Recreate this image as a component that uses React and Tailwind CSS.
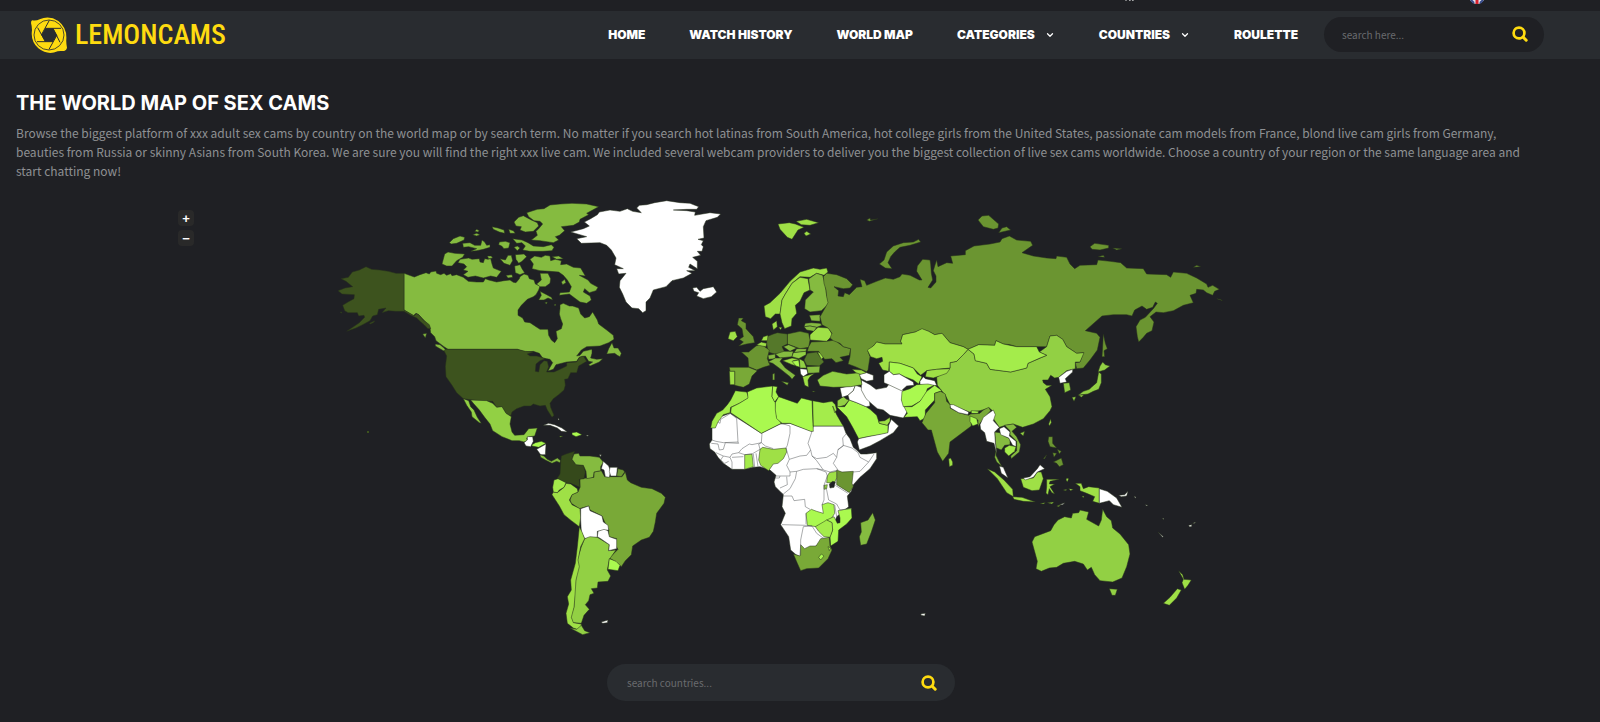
import React, { useState } from 'react';
import { ChevronDown } from 'lucide-react';

const navItems = [
  { label: 'HOME' },
  { label: 'WATCH HISTORY' },
  { label: 'WORLD MAP' },
  { label: 'CATEGORIES', menu: true },
  { label: 'COUNTRIES', menu: true },
  { label: 'ROULETTE' },
];

// Fill colors, from no cams (white) to the most cams (darkest)
const W = '#ffffff';
const A = '#aaf94f';
const B = '#a4ec4b';
const C = '#9fe046';
const D = '#92d044';
const E = '#85bb40';
const F = '#79a937';
const G = '#6b9531';
const H = '#55782a';
const I = '#3d531e';
const J = '#35491b';
const SEA = '#1f2024';

// Each region has its own origin, points are in thirds of a map unit
const regions = [
  {
    name: 'north-america',
    x: 320,
    y: 190,
    shapes: [
      [E, '252,250 283,261 300,254 318,248 328,252 332,246 348,243 350,250 362,254 372,250 380,256 392,251 396,257 410,254 430,262 445,274 470,276 490,276 496,266 506,270 530,276 552,272 570,270 580,277 588,278 598,266 600,260 612,252 624,256 628,266 642,270 646,282 660,288 656,300 648,314 640,320 622,328 604,346 594,360 594,376 608,384 614,396 630,398 648,410 660,418 684,418 686,436 694,450 704,458 712,446 708,424 724,416 728,402 722,386 718,372 720,356 720,344 730,340 748,348 758,348 776,354 782,372 794,384 808,380 818,366 832,390 836,402 860,420 880,436 882,448 866,458 840,468 800,470 784,480 770,498 780,496 790,484 816,478 816,490 812,504 830,508 848,506 838,516 810,528 806,524 818,516 806,514 796,498 778,502 770,514 740,516 708,524 700,538 684,543 690,532 698,518 690,508 668,504 658,490 640,484 615,486 592,478 384,478 372,470 348,452 344,440 332,428 330,414 322,402 296,374 288,370 280,377 252,360'],
      [I, '252,250 228,250 205,244 180,240 155,238 138,230 118,240 97,246 85,262 63,266 78,274 98,290 75,294 54,302 66,312 103,314 102,326 84,336 68,346 74,362 84,368 112,368 116,378 132,376 134,382 118,398 98,412 80,424 108,414 128,404 150,392 158,378 172,374 176,358 198,354 186,368 205,362 228,364 252,364 272,376 290,384 300,394 312,404 324,416 332,416 328,404 310,390 296,374 290,371 282,377 252,360'],
      [I, '148,400 164,392 162,397 152,402'],
      [I, '60,366 66,366 64,370'],
      [E, '346,462 360,464 372,474 382,486 370,482 356,474 346,468'],
      [E, '308,432 320,430 316,444'],
      [E, '876,458 866,476 860,492 884,490 892,496 900,500 904,490 894,474 882,474'],
      [E, '836,50 800,42 756,40 720,42 690,45 672,56 652,58 620,68 626,80 642,92 660,94 668,102 656,116 648,124 652,136 634,150 660,152 700,158 716,150 706,140 718,136 734,122 724,110 760,106 778,96 780,88 806,74 800,70'],
      [E, '582,96 596,82 610,77 634,90 652,98 656,108 640,124 616,126 600,120 604,110 588,108'],
      [E, '578,146 606,150 624,158 640,168 670,170 694,164 702,172 696,182 668,184 630,184 608,180 616,168 606,158 590,160'],
      [E, '538,156 556,154 570,158 566,174 552,176 545,168 536,164'],
      [E, '582,172 592,168 600,174 592,182'],
      [E, '516,110 534,114 552,120 554,130 538,126 520,118'],
      [E, '566,118 580,122 586,130 570,130'],
      [E, '388,158 400,146 420,138 434,142 432,150 410,160 394,162'],
      [E, '464,124 470,118 478,122 474,126'],
      [E, '458,134 470,130 480,134 470,138'],
      [E, '428,160 450,158 464,166 482,166 486,150 494,156 500,166 510,164 510,172 490,178 470,182 452,184 470,176 446,170 430,172'],
      [E, '366,222 374,192 384,186 404,190 434,192 428,202 410,212 396,228 380,228'],
      [E, '414,218 420,208 446,204 456,208 478,206 480,216 490,218 494,206 504,208 512,206 516,222 520,234 544,244 530,262 512,258 490,264 466,258 444,262 430,254 444,244 430,240 440,230 432,222'],
      [E, '540,206 556,210 564,196 574,196 578,212 570,226 552,220'],
      [E, '502,198 514,198 518,204 506,206'],
      [E, '586,194 612,192 620,200 606,214 596,220 588,208'],
      [E, '584,228 600,224 606,236 614,248 600,254 586,248'],
      [E, '558,256 576,254 578,262 564,264'],
      [E, '630,208 644,198 664,202 676,196 690,198 692,212 706,208 724,212 722,224 740,222 760,232 782,234 796,258 778,256 804,270 812,280 834,292 828,302 808,308 794,296 790,306 810,318 814,330 800,340 780,336 764,324 748,312 718,316 720,308 748,306 754,290 742,270 730,256 716,246 690,244 660,242 636,236 640,222'],
      [E, '696,200 716,198 730,206 710,208'],
      [E, '660,250 684,250 692,266 690,280 676,290 660,290 650,282 664,270'],
      [E, '724,276 734,268 738,278 728,284'],
      [E, '656,330 664,316 660,304 680,314 694,322 698,330 684,324 672,330'],
      [E, '674,338 682,336 680,342'],
      [E, '702,344 708,342 706,348'],
      [I, '376,478 592,478 616,484 640,486 622,492 630,498 650,498 664,502 676,506 660,512 648,522 646,544 656,546 660,524 672,512 682,514 686,530 680,546 702,546 720,538 740,528 740,518 770,516 778,502 790,498 800,514 776,528 770,548 752,548 744,566 734,568 736,586 732,600 716,614 700,626 690,640 692,652 702,676 696,682 682,660 676,646 660,648 640,642 632,648 612,648 590,656 576,666 572,678 558,670 546,650 530,652 518,634 494,634 470,632 430,626 410,608 396,586 378,560 376,530 380,498 372,482'],
      [D, '430,626 446,632 452,650 462,660 472,682 484,700 478,698 456,680 454,666 440,646'],
    ],
  },
  {
    name: 'greenland',
    x: 540,
    y: 190,
    shapes: [
      [W, '92,126 130,116 148,108 133,96 152,86 172,74 178,66 210,60 240,64 262,56 278,64 304,68 290,54 298,46 320,44 344,38 380,32 420,38 450,40 476,50 470,58 440,58 400,60 440,62 466,66 464,76 510,68 542,72 532,82 498,92 490,110 492,144 474,148 490,152 484,164 490,170 486,184 472,184 482,196 458,202 472,214 472,236 450,222 446,232 466,242 440,242 456,250 430,264 396,272 378,290 340,300 330,324 318,336 318,362 308,368 296,356 276,354 258,336 248,312 238,292 240,272 258,250 236,252 230,236 250,236 224,224 228,204 214,180 200,166 180,158 124,160 110,146 140,140'],
      [W, '458,294 470,292 480,304 490,296 520,290 530,306 514,320 490,326 470,318 476,308 462,304'],
    ],
  },
  {
    name: 'south-america',
    x: 480,
    y: 400,
    shapes: [
      [D, '-28,0 20,2 38,10 50,22 66,20 78,40 94,50 90,72 96,96 104,106 132,104 146,86 172,84 164,108 148,110 140,114 142,122 132,126 118,122 96,122 66,110 38,92 30,72 14,52 -2,30 -20,10'],
      [W, '132,128 142,120 142,110 158,110 160,124 152,140 138,138'],
      [A, '156,134 166,128 184,124 198,130 176,142 156,138'],
      [W, '170,148 198,132 196,164 182,164'],
      [E, '180,164 192,168 202,178 214,184 232,174 242,182 240,188 230,184 216,190 196,180 182,172'],
      [W, '190,76 206,70 224,74 246,84 262,96 244,94 232,84 210,76'],
      [E, '238,108 248,108 242,112'],
      [A, '276,98 290,96 306,104 288,110 276,104'],
      [W, '318,106 326,106 322,109'],
      [W, '234,54 238,60 234,60'],
      [W, '358,164 364,164 362,170'],
      [F, '300,236 320,234 342,232 342,216 364,212 374,230 392,230 426,230 436,216 442,240 452,248 484,262 516,266 544,280 556,292 552,310 530,340 526,366 520,394 508,412 484,420 458,438 454,464 436,482 424,500 408,486 388,474 414,448 404,432 410,416 386,410 386,388 374,366 366,348 330,330 326,318 298,326 274,310 270,300 276,284 294,276 300,262'],
      [J, '242,188 244,168 258,162 284,154 280,164 276,178 288,194 310,196 316,216 312,236 298,238 300,262 272,250 252,248 232,234 240,222'],
      [E, '276,178 282,162 296,160 300,168 330,168 358,172 370,186 362,200 362,212 342,216 340,232 320,236 318,214 310,196 288,194'],
      [W, '370,184 386,198 392,214 388,232 376,230 372,210 364,206'],
      [W, '390,202 412,202 410,228 392,228 388,214'],
      [G, '414,206 430,210 434,216 424,230 410,228'],
      [C, '258,250 272,252 292,266 294,276 276,284 268,300 276,314 300,326 302,352 298,380 274,362 252,344 238,318 216,284 220,276 232,278 252,262'],
      [B, '218,262 222,240 234,236 258,248 252,262 238,270 232,278 220,276'],
      [W, '302,326 326,318 330,332 366,348 370,366 384,376 386,390 352,394 352,412 314,416 304,396 302,360'],
      [D, '314,416 330,410 352,412 388,434 386,452 408,450 388,478 382,510 392,528 384,544 354,546 352,564 334,566 342,580 330,584 326,602 316,614 328,628 312,646 304,670 278,668 272,650 282,620 284,560 290,520 292,480 304,440'],
      [W, '354,394 372,388 384,392 388,410 410,418 410,446 386,452 388,434 362,416 352,410'],
      [C, '298,380 306,396 314,416 302,440 294,480 298,500 288,540 284,600 282,622 274,652 280,668 304,672 302,692 280,684 262,670 258,640 266,612 262,590 274,570 272,540 286,490 292,440'],
      [D, '270,684 290,688 304,676 314,692 330,698 308,704'],
      [A, '388,476 408,484 420,496 414,512 384,508'],
      [W, '364,666 384,660 382,668 368,670'],
    ],
  },
  {
    name: 'africa',
    x: 690,
    y: 370,
    shapes: [
      [W, '66,174 82,156 92,140 120,130 214,190 270,162 300,160 366,184 370,168 460,168 468,190 480,206 490,232 500,240 512,252 530,252 560,248 560,266 540,296 510,322 490,344 484,364 472,378 476,410 440,440 420,500 330,560 318,554 302,540 296,500 272,464 286,430 276,410 280,374 256,350 252,336 258,316 240,300 210,290 190,292 164,298 126,298 100,280 84,262 74,246 60,236 58,222 66,210'],
      [B, '112,104 122,90 136,62 150,64 170,66 176,84 148,100 122,112 120,128 100,134 84,156 76,174 62,174 66,154 80,130 98,120'],
      [A, '172,66 200,54 248,48 246,80 256,98 260,140 274,160 214,190 122,128 124,112 148,100 174,84'],
      [A, '248,48 262,50 258,66 266,80 254,96 246,80'],
      [A, '266,80 300,92 322,100 334,84 366,92 370,184 362,184 300,160 276,160 260,146 256,120 256,98'],
      [B, '368,92 400,98 426,94 436,104 440,120 434,128 428,108 440,134 456,162 460,168 370,168'],
      [C, '210,238 218,232 250,238 288,234 290,246 280,266 264,280 250,282 236,302 212,286 206,270'],
      [B, '164,254 186,252 190,290 164,298'],
      [G, '440,300 456,306 490,304 486,340 490,350 478,368 440,344 440,322'],
      [C, '412,318 418,308 440,304 440,324 434,338 410,338'],
      [C, '402,346 412,344 410,356 402,358'],
      [SEA, '418,342 428,334 436,336 432,352 420,354'],
      [A, '348,430 364,418 380,424 400,430 396,404 414,398 432,404 434,430 424,446 398,462 378,470 352,466'],
      [A, '444,422 484,414 486,444 470,462 446,480 444,514 422,528 420,500 428,480 426,458 410,450 432,440 442,460 450,458 450,444'],
      [B, '376,470 400,456 410,450 426,458 428,480 420,502 402,500 386,484'],
      [F, '310,552 330,558 332,524 344,536 360,528 378,528 392,506 418,502 420,528 426,540 414,566 386,594 350,596 332,602 322,580'],
      [A, '386,562 394,552 402,558 392,570'],
      [A, '414,530 422,534 418,542'],
      [E, '548,428 556,450 544,486 530,522 512,526 508,500 514,486 512,458 534,450'],
      [D, '442,92 460,80 470,88 478,90 464,106 442,112'],
      [A, '440,110 464,110 478,90 500,98 528,110 540,118 560,136 568,160 594,166 594,190 560,196 534,200 506,206 488,172 470,140 450,120'],
      [C, '566,154 584,152 600,142 600,154 592,166 568,160'],
      [W, '506,206 534,200 576,192 594,188 596,166 604,148 626,168 610,188 570,212 540,228 508,240 502,216'],
      [W, '450,54 468,50 496,46 490,62 474,76 456,82'],
      [W, '474,76 490,62 496,46 514,52 538,88 540,108 528,110 500,98 478,90'],
      [W, '514,30 540,44 558,58 590,52 600,38 636,44 640,72 636,90 652,124 640,144 600,136 580,120 562,116 548,104 528,86 514,60'],
    ],
    lines: [
      '84,156 90,160 92,148 122,130 140,146 144,216 100,218 78,214 66,210',
      '144,216 146,220 106,218 100,238 88,240 84,222 64,220',
      '216,190 214,218 186,224 178,222 156,236 146,248 126,252 120,262 100,258 78,248',
      '146,248 164,254 186,252 210,238 206,222 214,218 226,228 250,236',
      '120,262 126,276 126,298 M100,258 92,270 104,280 116,274 M126,262 160,260',
      '274,160 300,168 300,190 292,226 288,234 298,268 290,286 300,306 320,304 M298,268 330,258 350,256 362,240 354,220 366,184',
      '362,240 366,258 380,266 410,262 430,250 440,262 430,280 444,300 420,306 400,300 380,272 366,258',
      '440,262 444,238 460,228 458,204 468,192 M444,240 460,226 486,234 504,248 510,262 536,276 510,304 490,306 M536,276 552,252',
      '300,306 300,318 258,318 M270,318 268,324 256,324 M320,304 316,326 300,356 280,372 274,368 M290,320 292,344 270,354',
      '320,304 340,298 380,296 408,306 412,318 402,346 402,390 M380,296 400,300',
      '280,378 306,378 312,392 344,388 346,410 360,418 M348,430 348,462 M276,464 350,466 366,468',
      '402,390 396,404 M402,346 410,360 416,390 440,402 450,420 484,416 M436,346 474,370 M434,404 440,440',
      '340,470 332,510 332,556 M340,470 366,468 380,490 402,506 M190,252 194,292 M198,250 204,290',
    ],
  },
  {
    name: 'europe',
    x: 700,
    y: 190,
    shapes: [
      [C, '234,102 268,98 286,102 312,112 294,120 276,148 262,142 240,118'],
      [C, '288,94 320,88 356,98 330,106 304,104'],
      [C, '312,130 320,124 332,132 318,138'],
      [G, '500,90 510,84 512,90 534,86 508,94'],
      [G, '538,222 552,210 560,186 580,168 610,158 640,156 656,148 662,156 630,166 600,172 584,186 572,200 564,218 576,236 556,234'],
      [C, '192,348 210,338 240,310 270,274 300,246 340,234 360,238 380,234 384,246 372,256 350,250 330,262 300,260 276,280 256,312 246,330 240,372 226,372 212,386 196,380'],
      [C, '246,330 256,312 276,280 300,262 324,266 330,300 312,308 300,334 286,346 290,370 276,386 274,408 254,416 246,398 240,372'],
      [E, '330,264 350,250 368,256 376,284 380,316 388,340 364,362 330,366 314,356 316,330 340,306 330,300 326,266'],
      [C, '216,402 230,392 232,410 220,420'],
      [C, '236,412 246,412 242,420'],
      [E, '328,376 360,374 360,394 334,392'],
      [E, '312,410 316,400 334,398 360,400 366,406 350,412 330,408'],
      [E, '312,410 330,408 350,412 342,424 320,420'],
      [C, '330,434 354,412 386,414 398,436 380,454 330,450'],
      [G, '262,432 300,424 326,430 330,450 326,472 300,476 262,462'],
      [H, '200,440 220,432 232,428 262,432 262,462 246,470 256,490 224,492 204,486 200,460'],
      [G, '116,384 130,384 124,392 138,400 138,416 160,440 164,458 140,462 116,468 130,456 118,448 130,440 126,416 112,404'],
      [C, '84,446 90,426 106,424 112,440 100,452'],
      [G, '124,486 146,486 168,468 182,462 208,480 202,506 210,526 190,532 170,540 146,530 144,504'],
      [F, '88,532 146,532 172,542 156,558 148,582 130,592 104,586 104,544 90,544'],
      [C, '88,544 104,544 104,584 90,584'],
      [C, '184,452 190,440 204,436 202,452'],
      [C, '170,464 184,456 200,460 198,470 186,468'],
      [E, '204,496 226,492 226,506 206,508'],
      [E, '226,492 252,484 280,484 276,500 240,504'],
      [E, '250,470 266,464 290,474 270,484'],
      [E, '290,476 320,476 318,484 282,488'],
      [D, '280,488 318,484 318,494 296,506 276,500'],
      [E, '204,516 226,504 248,504 240,514 256,534 286,556 276,568 270,560 240,536 218,520'],
      [E, '244,574 266,578 262,586'],
      [E, '218,552 224,550 224,570 218,570'],
      [C, '248,512 276,504 298,508 280,512 290,528 276,524'],
      [A, '276,514 296,510 300,532 288,528'],
      [D, '298,506 312,514 320,534 300,534'],
      [W, '300,536 320,538 324,550 310,560 302,552'],
      [C, '308,560 344,550 330,560 324,570 326,592 314,586'],
      [E, '320,530 360,528 358,548 324,550'],
      [H, '312,510 322,490 350,486 368,510 372,516 358,528 320,526'],
      [C, '352,486 362,488 372,500 364,508'],
      [G, '326,470 334,456 380,454 404,450 430,470 452,476 448,496 420,502 430,512 408,518 396,506 374,508 356,484 322,484'],
      [D, '352,570 370,556 398,544 440,552 478,548 486,584 452,590 400,592 360,588'],
      [C, '456,538 484,540 500,548 484,554 468,548'],
      [W, '478,554 500,548 520,556 520,570 500,574 484,566'],
      [C, '336,604 346,604 340,606'],
    ],
  },
  {
    name: 'asia',
    x: 900,
    y: 200,
    shapes: [
      [G, '-220,220 -190,224 -160,236 -142,254 -150,264 -170,266 -198,260 -184,272 -186,288 -170,290 -166,278 -152,284 -130,262 -114,260 -120,238 -106,242 -100,256 -70,244 -44,234 -20,238 0,230 6,222 30,226 58,240 66,240 50,214 52,198 68,178 90,180 92,192 94,220 98,240 84,262 92,264 108,246 108,228 100,212 104,198 110,180 114,200 140,188 158,190 152,168 196,164 196,152 222,138 270,132 300,126 306,116 328,108 350,120 392,124 398,136 366,158 400,168 440,174 468,176 470,168 500,172 510,192 524,206 540,196 590,194 594,180 630,184 662,188 680,204 730,206 740,222 800,224 812,232 820,216 860,220 890,234 920,252 924,262 938,256 958,268 944,274 938,286 920,278 910,270 890,268 888,280 870,286 880,308 850,316 820,332 790,338 768,336 750,350 762,366 756,392 740,400 730,412 716,426 712,410 708,380 720,360 736,352 760,326 772,310 766,306 758,322 740,328 726,318 704,330 696,348 680,344 640,344 606,348 556,392 590,400 600,412 592,450 570,480 550,504 530,506 526,488 540,486 550,458 530,460 500,440 488,418 470,406 450,408 440,440 410,440 350,440 330,434 310,432 288,422 284,436 236,434 204,448 190,440 150,428 126,400 104,404 86,394 66,388 46,396 8,404 2,424 6,432 -20,432 -44,432 -70,426 -80,438 -96,454 -90,470 -96,510 -100,515 -134,500 -156,492 -150,470 -148,446 -170,440 -180,430 -200,422 -210,414 -204,400 -216,384 -234,374 -240,350 -234,340 -216,308 -220,290 -222,270 -228,250 -230,230'],
      [G, '234,60 246,48 266,46 296,72 294,84 280,88 250,80'],
      [G, '296,98 306,84 320,80 332,90'],
      [G, '570,140 584,130 626,136 626,144 600,150 576,148'],
      [G, '638,144 666,146 650,150'],
      [G, '594,170 610,166 614,172'],
      [G, '880,202 890,196 902,200'],
      [G, '950,296 960,298 968,302'],
      [G, '610,402 616,430 622,446 612,452 614,470 606,470 608,440'],
      [D, '204,448 222,462 226,482 260,490 270,508 332,516 380,504 384,490 440,466 418,456 440,440 450,408 470,406 488,418 500,440 530,460 552,458 540,486 526,486 526,506 500,512 476,532 464,534 452,526 444,540 428,540 430,548 440,556 456,556 436,568 450,590 456,620 450,632 430,656 400,672 368,682 340,672 316,676 298,682 280,656 282,636 268,624 240,632 208,636 150,614 136,586 112,556 110,532 150,504 150,488 170,484 190,464'],
      [C, '2,424 8,404 46,396 66,386 86,394 104,404 126,400 150,428 190,440 204,448 190,464 170,484 150,488 150,504 110,508 80,512 62,526 40,504 0,490 -32,486 -34,514 -52,510 -64,490 -52,484 -54,472 -70,476 -88,470 -98,450 -80,438 -70,426 -44,432 6,432'],
      [B, '204,448 236,434 284,436 288,422 310,432 350,440 410,440 418,456 440,466 420,474 384,490 380,504 332,516 270,508 260,490 226,482 222,462'],
      [A, '-32,486 0,490 40,504 52,522 66,530 56,552 40,540 14,530 -2,522 -20,524 -32,514'],
      [W, '-48,524 -32,514 -20,524 -2,522 40,546 42,556 20,558 4,572 -30,556 -48,548'],
      [C, '80,512 110,508 150,506 140,520 118,528 100,534 76,530'],
      [W, '60,544 70,530 76,536 104,542 110,556 88,558 60,554'],
      [A, '6,574 30,566 50,554 84,552 102,556 82,566 76,586 60,604 36,618 10,620 4,600'],
      [A, '12,620 36,620 60,604 80,574 104,556 126,572 104,580 104,600 76,630 76,654 60,662 52,650 12,652 22,640'],
      [W, '476,532 500,514 518,508 518,516 496,536 500,546 480,550'],
      [D, '490,550 508,548 512,570 494,578'],
      [D, '608,486 616,494 630,498 614,510 594,516 600,498'],
      [D, '596,516 604,522 604,548 596,568 580,574 564,582 534,586 550,574 568,568 576,560 590,548'],
      [D, '536,586 552,584 544,592'],
      [D, '516,592 528,590 522,604'],
    ],
  },
  {
    name: 'pacific',
    x: 900,
    y: 380,
    shapes: [
      [F, '104,40 122,34 136,42 140,64 152,76 150,84 176,98 206,106 212,102 240,100 250,90 266,82 272,92 256,110 240,130 234,140 234,120 214,116 214,138 190,156 150,186 146,220 128,244 112,216 94,150 84,150 66,128 70,118 78,100 104,68'],
      [W, '150,74 160,74 206,96 204,104 176,98 152,84'],
      [A, '210,108 230,116 234,132 218,138 210,124'],
      [A, '214,92 236,94 234,100 214,100'],
      [C, '146,236 152,234 158,246 158,256 148,260'],
      [E, '314,136 340,132 350,142 336,154 350,170 362,194 358,216 334,236 332,228 350,212 350,184 330,164 330,152'],
      [E, '284,156 300,158 312,168 330,176 330,194 314,196 304,210 290,204 288,226 300,250 306,260 290,246 284,232 288,210 286,180'],
      [W, '240,134 250,112 266,100 280,90 286,104 280,122 298,142 284,156 286,186 290,222 282,190 260,184 254,158 242,148'],
      [W, '298,146 312,140 330,156 328,168 348,184 348,200 338,196 326,174 302,164'],
      [B, '314,204 328,196 348,200 344,214 326,228 314,216'],
      [W, '298,258 310,262 324,294 304,280'],
      [D, '360,160 374,154 370,168'],
      [C, '446,132 452,116 454,128 448,138'],
      [C, '362,296 400,294 412,276 424,276 430,296 418,330 396,332 370,322'],
      [W, '370,294 390,290 412,266 420,254 434,266 412,276 400,292 376,300'],
      [C, '262,266 284,276 312,300 338,328 340,350 320,338 292,296'],
      [C, '338,350 366,352 406,366 370,364 342,358'],
      [C, '440,298 478,298 450,304 448,312 464,312 450,320 464,342 456,338 448,326 444,344 438,340 440,320'],
      [C, '500,294 506,296 502,306 498,300'],
      [C, '420,370 436,368 430,372'],
      [C, '442,368 462,366 456,372'],
      [C, '470,378 482,374 476,380'],
      [W, '478,374 494,368 488,374'],
      [C, '490,330 500,328 498,332'],
      [C, '506,326 520,328 512,332'],
      [C, '526,310 544,310 550,326 566,320 598,324 598,370 578,364 584,350 560,340 540,332 540,320'],
      [C, '546,348 552,348 550,354'],
      [W, '598,326 622,334 650,354 666,382 640,374 628,362 598,370'],
      [W, '656,346 674,344 684,334 680,348 664,350'],
      [W, '702,348 708,352 706,355'],
      [W, '736,374 744,376 740,378'],
      [W, '788,414 791,414 790,420'],
      [W, '774,456 790,470 788,472'],
      [W, '866,436 876,434 874,440 868,440'],
      [W, '878,430 888,426 884,430'],
      [G, '446,170 458,170 458,190 470,204 450,200 444,184'],
      [G, '472,208 484,214 478,222'],
      [G, '458,218 470,220 462,232'],
      [G, '460,246 484,234 490,254 478,260 470,250'],
      [G, '430,236 440,224 434,236'],
      [D, '396,486 404,470 452,452 462,434 474,420 494,410 514,414 518,400 536,398 540,390 566,396 560,418 596,438 604,420 608,388 620,410 634,422 638,444 660,462 686,494 690,522 680,560 666,594 638,606 600,602 584,584 574,562 562,570 550,552 524,544 490,550 470,562 448,564 424,574 408,566 412,544'],
      [D, '628,626 652,628 646,646 636,646'],
      [C, '836,572 848,584 852,598 874,600 864,616 854,628 846,608 850,598'],
      [C, '832,626 844,630 830,654 808,676 790,670 810,652'],
      [W, '62,702 76,700 74,708 64,706'],
    ],
  },
];

const WorldMap = ({ zoom }) => {
  const width = 1600 / zoom;
  const height = 460 / zoom;
  const viewBox = `${800 - width / 2} ${420 - height / 2} ${width} ${height}`;

  return (
    <svg viewBox={viewBox} className="block w-full" role="img" aria-label="World map">
      {regions.map((region) => (
        <g
          key={region.name}
          transform={`translate(${region.x} ${region.y}) scale(${1 / 3})`}
          stroke="#26301c"
          strokeWidth="1.5"
          strokeLinejoin="round"
        >
          {region.shapes.map(([fill, points], index) => (
            <polygon key={index} fill={fill} points={points} />
          ))}
          {region.lines?.map((line, index) => (
            <path key={index} d={`M${line}`} fill="none" stroke="#55585a" />
          ))}
        </g>
      ))}
      <path d="M367 431h2v2h-2z" fill="#3d531e" />
    </svg>
  );
};

const SearchIcon = () => (
  <svg viewBox="0 0 16 16" className="h-4 w-4" fill="none" stroke="currentColor" strokeLinecap="round">
    <circle cx="7" cy="7" r="5.4" strokeWidth="2.7" />
    <path d="M11.2 11.2L14.2 14.2" strokeWidth="3" />
  </svg>
);

const Logo = () => (
  <a href="#home" className="flex items-center gap-2 text-[#fedb10]" aria-label="Lemoncams">
    <svg viewBox="0 0 108 108" className="h-9 w-9">
      <path
        d="M4 10Q16 12 26 7Q54-6 82 12Q108 32 106 66Q105 78 108 92Q106 102 94 102Q86 101 80 103Q50 116 22 94Q-2 72 3 40Q3 28 0 18Q0 11 4 10Z"
        fill="#fedb10"
      />
      <circle cx="54" cy="54" r="45" fill="none" stroke="#292c30" strokeWidth="2.5" />
      <path d="M43 34H66L78 54L66 74H43L31 54Z" fill="#292c30" />
      <path
        d="M43 34H90M66 34L87 76M78 54L54 97M66 74H18M43 74L20 32M31 54L55 10"
        fill="none"
        stroke="#292c30"
        strokeWidth="3"
      />
    </svg>
    <span className="font-['Liberation_Sans_Narrow','Roboto_Condensed',sans-serif] text-[28px] leading-9 font-medium">
      LEMONCAMS
    </span>
  </a>
);

const App = () => {
  const [zoom, setZoom] = useState(1);

  return (
    <div className="min-h-screen bg-[#1f2024] font-['Noto_Sans_CJK_SC',sans-serif] text-[#8e9093]">
      {/* Top bar */}
      <div className="flex h-[11px] items-start justify-end overflow-hidden pr-[116px]">
        <svg viewBox="0 0 12 3" className="mr-[334px] h-[3px] w-3">
          <path d="M1 0h2M5 0h1v1M8 0h1v1" stroke="#d0d0d0" fill="none" />
        </svg>
        <svg viewBox="0 0 14 4" className="h-1 w-[14px]">
          <path d="M0 0H14Q11 4 7 4Q3 4 0 0Z" fill="#dfe3ee" />
          <path d="M1 0L4 3M13 0L10 3" stroke="#384b8b" strokeWidth="2" />
          <path d="M7 0V4" stroke="#d8202c" strokeWidth="3" />
        </svg>
      </div>

      {/* Header */}
      <header className="flex h-12 items-center bg-[#292c30] pr-14 pl-[31px]">
        <Logo />
        <nav className="ml-auto flex items-center gap-11 font-['Inter',sans-serif] text-[12px] font-black text-white">
          {navItems.map((item) =>
            item.menu ? (
              <button key={item.label} type="button" className="flex items-center gap-2.5">
                {item.label}
                <ChevronDown className="h-2.5 w-2.5" strokeWidth={3} />
              </button>
            ) : (
              <a key={item.label} href={`#${item.label.toLowerCase().replace(' ', '-')}`}>
                {item.label}
              </a>
            )
          )}
        </nav>
        <form className="mb-0.5 ml-[26px] flex h-[35px] w-[220px] items-center rounded-full bg-[#1f2024] pr-4 pl-[18px]">
          <input
            type="text"
            aria-label="Search"
            placeholder="search here..."
            className="min-w-0 flex-1 bg-transparent text-[10px] outline-none placeholder:text-[#696b6e]"
          />
          <button type="button" aria-label="Submit search" className="text-[#fedb10]">
            <SearchIcon />
          </button>
        </form>
      </header>

      <main className="pt-[31px] pr-[54px] pl-4">
        <h1 className="font-['Inter',sans-serif] text-[20px] leading-[26px] font-bold text-white">
          THE WORLD MAP OF SEX CAMS
        </h1>
        <p className="mt-[7px] text-[12px] leading-[19px]">
          Browse the biggest platform of xxx adult sex cams by country on the world map or by search term. No matter
          if you search hot latinas from South America, hot college girls from the United States, passionate cam
          models from France, blond live cam girls from Germany, beauties from Russia or skinny Asians from South
          Korea. We are sure you will find the right xxx live cam. We included several webcam providers to deliver you
          the biggest collection of live sex cams worldwide. Choose a country of your region or the same language area
          and start chatting now!
        </p>

        {/* Map */}
        <div className="relative mt-[10px] -mr-[54px] -ml-4 overflow-hidden">
          <WorldMap zoom={zoom} />
          <div className="absolute top-5 left-[178px] flex flex-col gap-1 font-['Liberation_Sans',sans-serif] text-[13px] font-bold text-white">
            <button
              type="button"
              aria-label="Zoom in"
              onClick={() => setZoom(Math.min(zoom * 1.5, 8))}
              className="flex h-4 w-4 items-center justify-center rounded-sm bg-[#292929] leading-none"
            >
              +
            </button>
            <button
              type="button"
              aria-label="Zoom out"
              onClick={() => setZoom(Math.max(zoom / 1.5, 1))}
              className="flex h-4 w-4 items-center justify-center rounded-sm bg-[#292929] leading-none"
            >
              −
            </button>
          </div>
        </div>

        {/* Country search */}
        <form className="mx-auto mt-[14px] flex h-[37px] w-[348px] items-center rounded-full bg-[#292c30] pr-[18px] pl-5">
          <input
            type="text"
            aria-label="Search countries"
            placeholder="search countries..."
            className="min-w-0 flex-1 bg-transparent text-[10px] outline-none placeholder:text-[#696b6e]"
          />
          <button type="button" aria-label="Submit country search" className="text-[#fedb10]">
            <SearchIcon />
          </button>
        </form>
      </main>
    </div>
  );
};

export default App;
